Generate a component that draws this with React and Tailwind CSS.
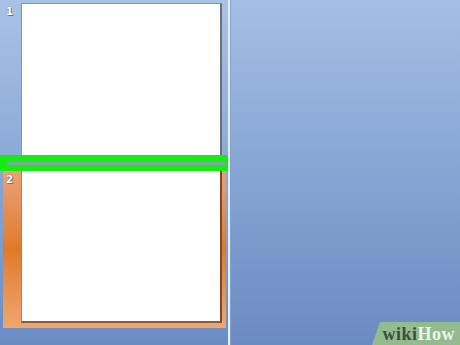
import React from 'react';

const numStyle = { fontFamily: '"DejaVu Sans", sans-serif', textShadow: '0 0 1px #555, 1px 1px 0 #777' };

export default function App() {
  return (
    <div className="w-[460px] h-[345px] flex overflow-hidden relative">
      {/* Slides pane */}
      <div className="w-[228px] h-full flex flex-col bg-gradient-to-b from-[#a9c3e7] to-[#6a8cc3] pt-[3px]">
        <div className="flex">
          <span className="w-[21px] pl-[6px] pt-[4px] text-[10px] leading-none font-bold text-white" style={numStyle}>
            1
          </span>
          <div className="w-[201px] h-[152px] bg-white border-l border-t border-[#8595ad] border-r-2 border-r-[#6d6f78]" />
        </div>

        {/* insertion marker */}
        <div className="h-[16px] bg-[#14ec14] flex items-center pl-[7px] pr-[4px] -mr-[2px]">
          <div className="h-[3px] w-full bg-[#7fa6a0]" />
        </div>

        <div className="ml-[3px] w-[223px] h-[157px] flex bg-gradient-to-b from-[#eaa274] via-[#e07a28] to-[#efa66e]">
          <span className="w-[18px] pl-[3px] pt-[4px] text-[10px] leading-none font-bold text-white" style={numStyle}>
            2
          </span>
          <div className="w-[201px] h-[152px] bg-white border-l border-[#b08060] border-r-2 border-r-[#7a4a2a] border-b-2 border-b-[#8a5a3a]" />
        </div>
      </div>

      {/* splitter */}
      <div className="w-[2px] h-full bg-[#e4eefa]" />
      <div className="w-[1px] h-full bg-[#86a2cf]" />

      {/* Main area */}
      <div className="flex-1 h-full bg-gradient-to-b from-[#a4bfe5] to-[#6a8bc2]" />

      {/* watermark */}
      <div
        className="absolute right-0 bottom-0 w-[88px] h-[23px] bg-[#93bb8e] flex items-center justify-end pr-[5px]"
        style={{ clipPath: 'polygon(8px 0, 100% 0, 100% 100%, 0 100%)' }}
      >
        <span className="text-[18px] leading-none font-bold tracking-[0.5px]" style={{ fontFamily: '"Liberation Serif", serif' }}>
          <span className="text-[#3b4d3f]">wiki</span>
          <span className="text-[#eef3ea]">How</span>
        </span>
      </div>
    </div>
  );
}
